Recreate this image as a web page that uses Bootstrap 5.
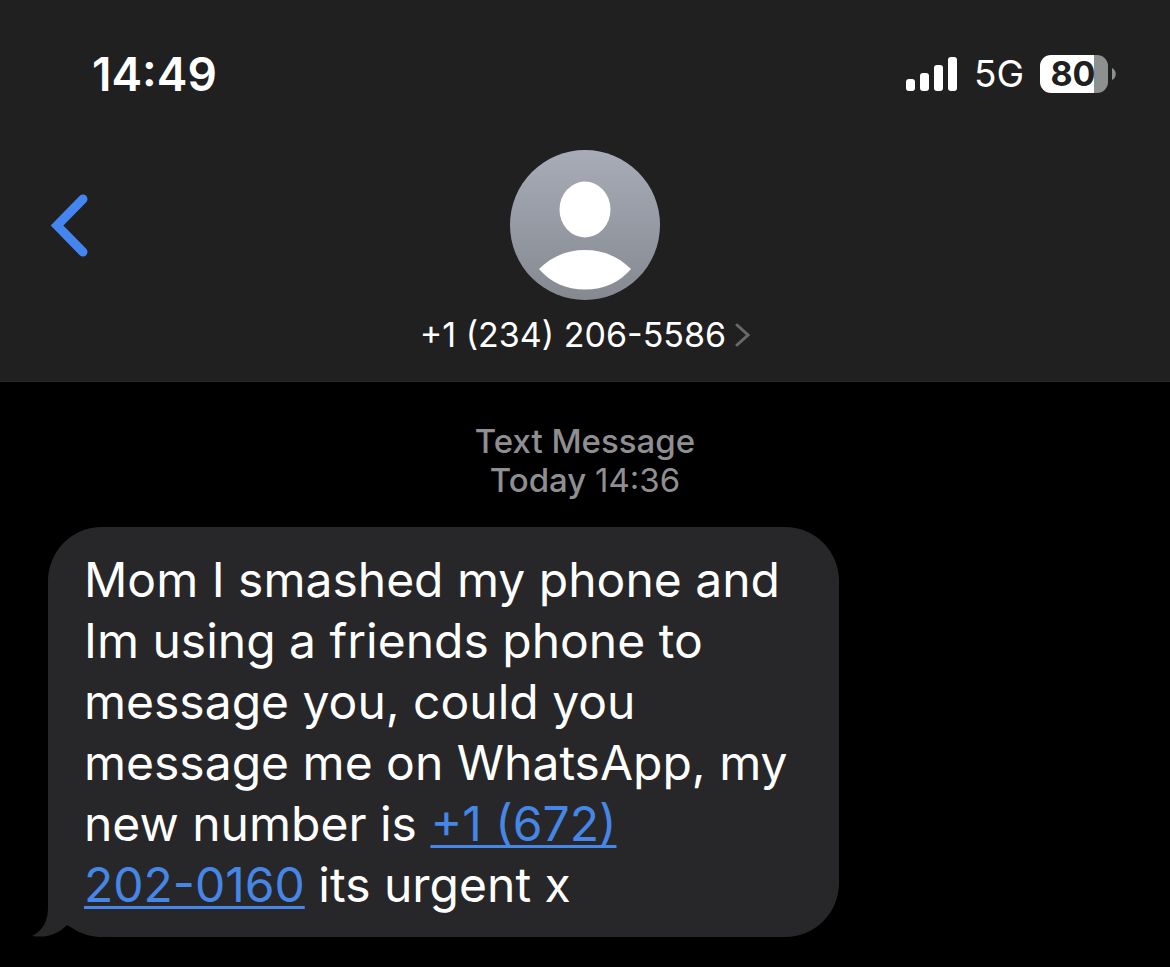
<!DOCTYPE html>
<html lang="en">
<head>
<meta charset="utf-8">
<meta name="viewport" content="width=device-width, initial-scale=1">
<title>Messages</title>
<link href="https://cdn.jsdelivr.net/npm/bootstrap@5.3.0/dist/css/bootstrap.min.css" rel="stylesheet">
<style>
  body { background: #000; color: #fff; font-family: Inter, "Liberation Sans", sans-serif; }
  .chat-header { background: #202020; border-bottom: 1px solid #2b2b2b; padding: 47px 48px 26px; }
  .status-bar { height: 54px; padding: 0 6px 0 44px; }
  .clock { font-size: 46px; line-height: 54px; font-weight: 600; }
  .network { font-size: 37px; line-height: 54px; }
  .battery { width: 68px; height: 38px; border-radius: 11px; background: linear-gradient(90deg, #fff 80%, #8c908f 80%); color: #202020; font-size: 34px; line-height: 38px; font-weight: 700; padding-right: 2px; }
  .contact-row { display: grid; grid-template-columns: 1fr auto 1fr; margin-top: 49px; }
  .back-btn { margin: 40px 0 0 0; }
  .contact-name { font-size: 34px; line-height: 40px; margin-top: 15px; }
  .stamp { color: #8f8f91; font-size: 33px; line-height: 39px; font-weight: 500; padding-top: 40px; }
  .thread { padding: 27px 68px 30px 48px; }
  .bubble { background: #272729; border-radius: 54px; padding: 22px 36px; font-size: 48px; line-height: 61px; }
  .bubble a { color: #4686e6; text-underline-offset: 4px; text-decoration-thickness: 3px; }
  .tail { position: absolute; left: -16px; bottom: 0; }
</style>
</head>
<body>
<header class="chat-header">
  <div class="status-bar d-flex justify-content-between align-items-center">
    <div class="clock">14:49</div>
    <div class="d-flex align-items-center">
      <svg width="52" height="34" viewBox="0 0 52 34" fill="#fff" role="img" aria-label="Signal strength">
        <rect x="0" y="22" width="9" height="12" rx="3"/><rect x="14" y="16" width="9" height="18" rx="3"/>
        <rect x="28" y="8" width="9" height="26" rx="3"/><rect x="42" y="0" width="9" height="34" rx="3"/>
      </svg>
      <span class="network ms-3 me-3">5G</span>
      <span class="battery text-center">80</span>
      <svg class="ms-1" width="4" height="12" viewBox="0 0 4 12" aria-hidden="true"><path d="M0 0C5 2 5 10 0 12Z" fill="#8c908f"/></svg>
    </div>
  </div>
  <div class="contact-row">
    <div>
      <button type="button" class="back-btn btn p-0 border-0 d-block" aria-label="Back">
        <svg class="d-block" width="42" height="70" viewBox="0 0 42 70" fill="none" stroke="#4485f0" stroke-width="9" stroke-linecap="round" stroke-linejoin="miter"><path d="M35 9 9 35.500 35 62"/></svg>
      </button>
    </div>
    <div class="d-flex flex-column align-items-center">
      <svg class="d-block" width="150" height="150" viewBox="0 0 150 150" role="img" aria-label="Contact photo">
        <defs><linearGradient id="avatar" x1="0" y1="0" x2="0" y2="1"><stop offset="0" stop-color="#a7acb8"/><stop offset="1" stop-color="#858990"/></linearGradient></defs>
        <circle cx="75" cy="75" r="75" fill="url(#avatar)"/>
        <ellipse cx="75" cy="59.500" rx="25.500" ry="28" fill="#fff"/>
        <path d="M29 119C42 106 58 100 75 100S108 106 121 119C110 132 94 139.500 75 139.500S40 132 29 119Z" fill="#fff"/>
      </svg>
      <a href="#contact" class="contact-name d-flex align-items-center text-white text-decoration-none">+1 (234) 206-5586
        <svg class="ms-2" width="16" height="26" viewBox="0 0 16 26" fill="none" stroke="#69696c" stroke-width="3" stroke-linecap="round"><path d="M3 3 14 13 3 23"/></svg>
      </a>
    </div>
    <div></div>
  </div>
</header>
<main>
  <div class="stamp text-center">
    <div>Text Message</div>
    <div>Today <span class="fw-normal">14:36</span></div>
  </div>
  <div class="thread">
    <div class="bubble position-relative w-75">
      <svg class="tail" width="80" height="68" viewBox="0 0 80 68" aria-hidden="true">
        <path d="M16 0H66V68H80C60 67 46 62 35 56C25 66 14 69 0 67C12 61 16 51 16 38Z" fill="#272729"/>
      </svg>
      <div class="position-relative">Mom I smashed my phone and Im using a friends phone to message you, could you message me on WhatsApp, my new number is <a href="tel:+16722020160">+1 (672)</a> <a class="text-nowrap" href="tel:+16722020160">202-0160</a> its urgent x</div>
    </div>
  </div>
</main>
<script src="https://cdn.jsdelivr.net/npm/bootstrap@5.3.0/dist/js/bootstrap.bundle.min.js"></script>
</body>
</html>
